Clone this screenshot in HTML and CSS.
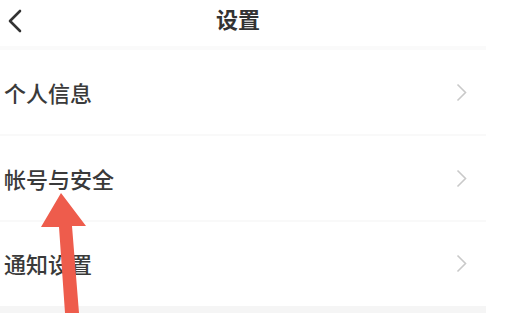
FILE: index.html
```html
<!DOCTYPE html>
<html lang="zh">
<head>
<meta charset="utf-8">
<link rel="stylesheet" href="styles.css">
</head>
<body>
<div class="page">
  <header class="header">
    <svg class="back" width="16" height="24" viewBox="0 0 16 24"><path d="M13 2 L3 12 L13 22" fill="none" stroke="#333" stroke-width="2.6" stroke-linecap="round" stroke-linejoin="round"/></svg>
    <div class="title">设置</div>
  </header>
  <div class="list">
    <div class="row"><span class="label">个人信息</span><svg class="chev" width="11" height="19" viewBox="0 0 11 19"><path d="M1.5 1.5 L9.5 9.5 L1.5 17.5" fill="none" stroke="#c9c9c9" stroke-width="1.6"/></svg></div>
    <div class="row"><span class="label">帐号与安全</span><svg class="chev" width="11" height="19" viewBox="0 0 11 19"><path d="M1.5 1.5 L9.5 9.5 L1.5 17.5" fill="none" stroke="#c9c9c9" stroke-width="1.6"/></svg></div>
    <div class="row last"><span class="label">通知设置</span><svg class="chev" width="11" height="19" viewBox="0 0 11 19"><path d="M1.5 1.5 L9.5 9.5 L1.5 17.5" fill="none" stroke="#c9c9c9" stroke-width="1.6"/></svg></div>
  </div>
  <div class="band"></div>
</div>
<svg class="arrow" width="506" height="313" viewBox="0 0 506 313"><polygon points="61,193 86,226 72,226 79,313 65,313 59,227 41,227" fill="#ee5c4c"/></svg>
</body>
</html>
```
FILE: styles.css
```css
html, body {
  margin: 0;
  padding: 0;
  background: #fff;
  width: 506px;
  height: 313px;
  overflow: hidden;
}
body {
  font-family: "Noto Sans CJK SC", "Noto Sans", sans-serif;
  color: #333;
  position: relative;
}
.page {
  width: 486px;
}
.header {
  height: 46px;
  display: flex;
  align-items: center;
  border-bottom: 4px solid #fafafa;
  position: relative;
}
.back {
  margin-left: 7px;
  margin-top: -4px;
}
.title {
  position: absolute;
  left: 0;
  right: 10px;
  top: 3px;
  text-align: center;
  font-size: 22px;
  font-weight: 700;
  color: #333;
  line-height: 30px;
}
.list {
  display: flex;
  flex-direction: column;
}
.row {
  height: 84px;
  display: flex;
  align-items: center;
  justify-content: space-between;
  padding: 0 19px 0 4px;
  border-bottom: 2px solid #f9f9f9;
}
.row.last {
  height: 82px;
  border-bottom: none;
  padding-bottom: 2px;
}
.label {
  font-size: 22px;
  line-height: 30px;
  font-weight: 500;
  color: #3a3a3a;
}
.band {
  height: 20px;
  background: #f5f5f5;
}
.arrow {
  position: absolute;
  left: 0;
  top: 0;
}
```
